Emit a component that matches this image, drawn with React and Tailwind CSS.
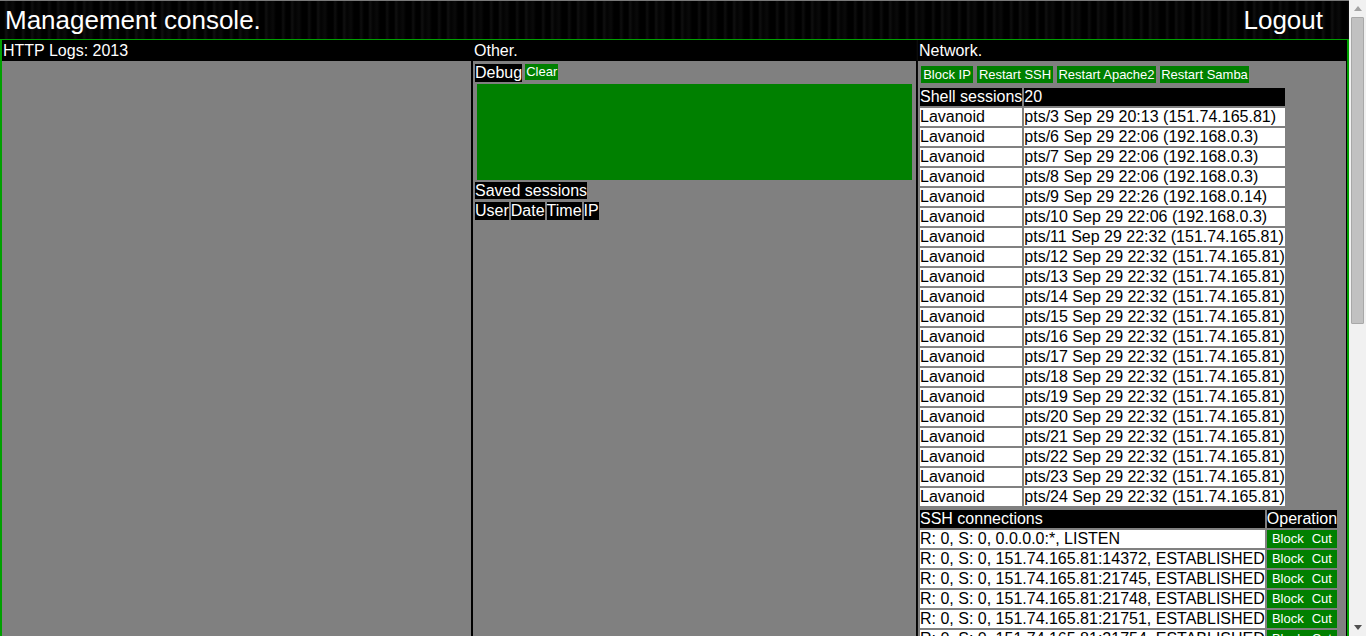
import React from 'react';

const texture =
  'bg-[repeating-linear-gradient(90deg,#000_0px,#000_4px,#101010_6px,#030303_9px,#0a0a0a_13px,#000_16px,#000_21px,#0e0e0e_23px,#000_26px)]';

const shellSessions = [
  ['pts/3', '20:13', '151.74.165.81'],
  ['pts/6', '22:06', '192.168.0.3'],
  ['pts/7', '22:06', '192.168.0.3'],
  ['pts/8', '22:06', '192.168.0.3'],
  ['pts/9', '22:26', '192.168.0.14'],
  ['pts/10', '22:06', '192.168.0.3'],
  ...Array.from({ length: 14 }, (_, i) => [`pts/${11 + i}`, '22:32', '151.74.165.81']),
];

const sshConnections = [
  'R: 0, S: 0, 0.0.0.0:*, LISTEN',
  'R: 0, S: 0, 151.74.165.81:14372, ESTABLISHED',
  ...Array.from({ length: 34 }, (_, i) => `R: 0, S: 0, 151.74.165.81:${21745 + i * 3}, ESTABLISHED`),
];

const netButtons = [
  { label: 'Block IP', w: 'w-[52px]' },
  { label: 'Restart SSH', w: 'w-[76px]' },
  { label: 'Restart Apache2', w: 'w-[99px]' },
  { label: 'Restart Samba', w: 'w-[89px]' },
];

const ColumnHeader = ({ children }) => (
  <div className="h-[21px] bg-black pl-[1px] pt-[2px] text-[16px] leading-[18px] text-white">{children}</div>
);

// Classic browser scrollbar, drawn because the headless page hides its own
const Scrollbar = () => (
  <div className="flex h-screen w-[17px] shrink-0 flex-col bg-[#f1f1f1]">
    <div className="flex h-[17px] items-center justify-center">
      <svg width="8" height="5" viewBox="0 0 8 5">
        <path d="M0 5 L4 0 L8 5 Z" fill="#a3a3a3" />
      </svg>
    </div>
    <div className="flex-1 px-[2px]">
      <div className="h-[307px] rounded-[1px] border border-[#a8a8a8] bg-[#c1c1c1]" />
    </div>
    <div className="flex h-[17px] items-center justify-center">
      <svg width="8" height="5" viewBox="0 0 8 5">
        <path d="M0 0 L8 0 L4 5 Z" fill="#505050" />
      </svg>
    </div>
  </div>
);

export default function App() {
  return (
    <div className="flex h-screen overflow-hidden bg-black font-['Liberation_Sans',Arial,sans-serif]">
      <div className="h-screen flex-1 overflow-hidden">
        {/* Top bar */}
        <header className={`h-[39px] border-t border-[#7a7a7a] ${texture} flex items-start justify-between pl-[5px] pr-[26px] pt-[4px] text-white`}>
          <h1 className="text-[26px] leading-[30px]">Management console.</h1>
          <a className="cursor-pointer text-[26px] leading-[30px]">Logout</a>
        </header>

        {/* Main table */}
        <div className={`border-t border-x-2 border-[#00a000] ${texture} pr-[1px] pb-[2px]`}>
          <div className="grid grid-cols-[469px_443px_428px] gap-x-[2px]">
            {/* HTTP logs */}
            <div className="flex flex-col">
              <ColumnHeader>HTTP Logs: 2013</ColumnHeader>
              <div className="flex-1 bg-[#808080]" />
            </div>

            {/* Other */}
            <div className="flex flex-col">
              <ColumnHeader>Other.</ColumnHeader>
              <div className="flex-1 bg-[#808080] pt-[3px] pl-[2px]">
                <div className="flex h-[20px] items-start">
                  <span className="bg-black text-[16px] leading-[18px] text-white">Debug</span>
                  <button className="ml-[3px] bg-[#008000] px-[1px] text-[13px] leading-[16px] text-white">Clear</button>
                </div>
                <div className="ml-[2px] h-[96px] w-[435px] bg-[#008000]" />
                <div className="mt-[2px] h-[18px] text-[16px] leading-[18px]">
                  <span className="bg-black text-white">Saved sessions</span>
                </div>
                <table className="-ml-[2px] border-separate border-spacing-[2px] text-[16px] leading-[18px] text-white">
                  <thead>
                    <tr>
                      {['User', 'Date', 'Time', 'IP'].map((h) => (
                        <th key={h} className="bg-black p-0 font-normal">{h}</th>
                      ))}
                    </tr>
                  </thead>
                </table>
              </div>
            </div>

            {/* Network */}
            <div className="flex flex-col">
              <ColumnHeader>Network.</ColumnHeader>
              <div className="flex-1 bg-[#808080] pt-[5px]">
                <div className="ml-[3px] flex gap-[4px]">
                  {netButtons.map((b) => (
                    <button key={b.label} className={`${b.w} h-[17px] bg-[#008000] text-center text-[13px] leading-[17px] text-white`}>
                      {b.label}
                    </button>
                  ))}
                </div>

                <table className="mt-[3px] border-separate border-spacing-[2px] text-[16px] leading-[18px]">
                  <thead>
                    <tr>
                      <th className="bg-black p-0 text-left font-normal text-white">Shell sessions</th>
                      <th className="bg-black p-0 text-left font-normal text-white">20</th>
                    </tr>
                  </thead>
                  <tbody>
                    {shellSessions.map(([pts, time, ip]) => (
                      <tr key={pts}>
                        <td className="bg-white p-0 text-black">Lavanoid</td>
                        <td className="bg-white p-0 text-black">{`${pts} Sep 29 ${time} (${ip})`}</td>
                      </tr>
                    ))}
                  </tbody>
                </table>

                <table className="border-separate border-spacing-[2px] text-[16px] leading-[18px]">
                  <thead>
                    <tr>
                      <th className="bg-black p-0 text-left font-normal text-white">SSH connections</th>
                      <th className="bg-black p-0 text-left font-normal text-white">Operation</th>
                    </tr>
                  </thead>
                  <tbody>
                    {sshConnections.map((c) => (
                      <tr key={c}>
                        <td className="whitespace-nowrap bg-white p-0 text-black">{c}</td>
                        <td className="bg-[#008000] p-0">
                          <div className="flex h-[18px] items-center justify-center gap-[8px] text-[13px] text-white">
                            <button>Block</button>
                            <button>Cut</button>
                          </div>
                        </td>
                      </tr>
                    ))}
                  </tbody>
                </table>
              </div>
            </div>
          </div>
        </div>
      </div>
      <Scrollbar />
    </div>
  );
}
